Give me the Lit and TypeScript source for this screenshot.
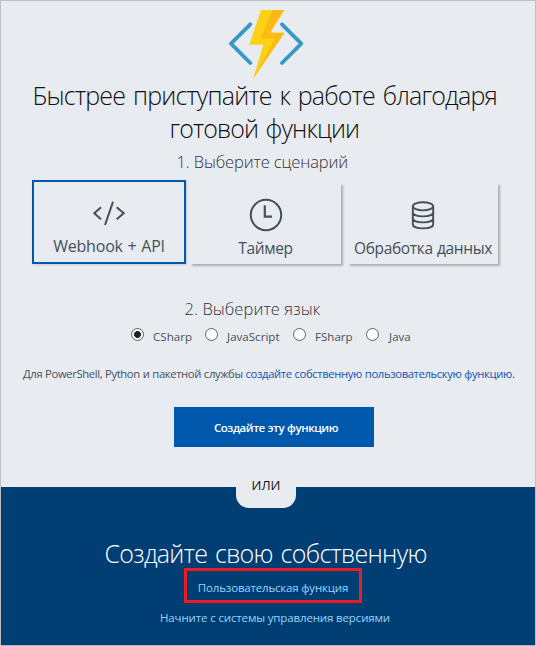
import { LitElement, html, css, svg } from "lit";
import { customElement, property, state } from "lit/decorators.js";

const icons: Record<string, unknown> = {
  code: svg`<g stroke-width="2"><path d="M20 11.3 13.3 17.3 20 23.3M35.7 11.3 42.7 17.3 35.7 23.3"/><path d="M32 5.7 24 29"/></g>`,
  clock: svg`<circle cx="28" cy="19" r="15.2" stroke-width="2"/><path d="M26.8 9.2V20.7H34" stroke-width="2.2"/>`,
  data: svg`<g stroke-width="1.9"><ellipse cx="28" cy="10.3" rx="10.2" ry="4.1"/><path d="M17.8 10.3V28.2C17.8 33.8 38.2 33.8 38.2 28.2V10.3M17.8 16.2C17.8 21.8 38.2 21.8 38.2 16.2M17.8 22.2C17.8 27.8 38.2 27.8 38.2 22.2"/></g>`,
};

@customElement("scenario-card")
class ScenarioCard extends LitElement {
  @property() icon = "code";
  @property() label = "";
  @property({ type: Boolean, reflect: true }) selected = false;

  static styles = css`
    :host {
      box-sizing: border-box;
      display: flex;
      flex-direction: column;
      align-items: center;
      height: 81px;
      padding-top: 13px;
      box-shadow: 2px 2px 2px rgba(0, 0, 0, 0.26);
      background: #e8ebf0;
      color: #46505a;
      font-size: 15.5px;
      letter-spacing: -0.34px;
      word-spacing: 0.5px;
      white-space: nowrap;
      cursor: pointer;
    }
    :host([selected]) {
      height: 84px;
      padding-top: 14px;
      border: 2px solid #0058ad;
      box-shadow: 1px 1px 2px rgba(0, 0, 0, 0.15);
      font-size: 16px;
      letter-spacing: -0.2px;
      word-spacing: 0.8px;
    }
    svg {
      width: 56px;
      height: 40px;
      fill: none;
      stroke: #46505a;
    }
    span {
      line-height: 24px;
    }
    :host([selected]) span {
      margin-top: -2px;
    }
  `;

  render() {
    return html`<svg viewBox="0 0 56 40">${icons[this.icon]}</svg><span>${this.label}</span>`;
  }
}

@customElement("app-root")
class AppRoot extends LitElement {
  @state() private language = "CSharp";
  private languages = ["CSharp", "JavaScript", "FSharp", "Java"];

  static styles = css`
    :host {
      display: block;
      font-family: "Open Sans", "Noto Sans", sans-serif;
      font-size: 11.5px;
      color: #46505a;
      white-space: nowrap;
    }
    .page {
      box-sizing: border-box;
      display: flex;
      flex-direction: column;
      width: 536px;
      height: 646px;
      border: 1px solid #bfc0c2;
      border-bottom-color: #a9b9ca;
      background: #e8ebf0;
    }
    .start {
      display: flex;
      flex-direction: column;
      height: 486px;
    }
    .logo {
      width: 78px;
      height: 78px;
      margin-left: 226px;
    }
    h1, h2, h3 {
      margin: 0;
      font-weight: 300;
    }
    h1 {
      font-size: 25px;
      line-height: 33px;
      color: #111;
    }
    h1 span {
      display: block;
      margin-left: 31.5px;
      letter-spacing: -0.8px;
      word-spacing: 2px;
    }
    h1 .second {
      margin-left: 168.5px;
      letter-spacing: -0.9px;
    }
    h3 {
      font-size: 16.5px;
      line-height: 24px;
      color: #333;
    }
    .step1 {
      margin: 5px 0 6px 175.5px;
      letter-spacing: -0.13px;
    }
    .step2 {
      margin: 33px 0 0 183.5px;
      letter-spacing: 0.08px;
    }
    .cards {
      display: grid;
      grid-template-columns: 154px 151px 150px;
      column-gap: 4px;
      align-items: end;
      height: 84px;
      margin-left: 31px;
    }
    .cards :last-child {
      margin-left: 3px;
      margin-right: -3px;
    }
    .languages {
      display: grid;
      grid-template-columns: 74px 88px 73px auto;
      height: 26px;
      margin-left: 130px;
    }
    label {
      display: flex;
      align-items: center;
      gap: 9px;
      letter-spacing: 0.04px;
    }
    label:last-child {
      gap: 10px;
    }
    label span {
      padding-top: 5px;
    }
    input {
      appearance: none;
      box-sizing: border-box;
      width: 13px;
      height: 13px;
      margin: 0;
      border: 1px solid #606060;
      border-radius: 50%;
      background: #fff;
    }
    input:checked {
      background: radial-gradient(circle, #222 3.1px, #fff 3.8px);
    }
    .note {
      margin: 17px 0 0 22px;
      font-size: 11.25px;
      line-height: 20px;
      letter-spacing: -0.37px;
      word-spacing: 0.3px;
    }
    .note a {
      color: #1154ae;
    }
    .create {
      width: 200px;
      height: 40px;
      margin: 23px 0 0 173px;
      padding: 1px 0 0 4px;
      border: 0;
      background: #0058ad;
      color: #fff;
      font: 600 11.5px "Open Sans", "Noto Sans", sans-serif;
      letter-spacing: -0.45px;
      word-spacing: 0.4px;
      text-align: center;
    }
    .custom {
      display: flex;
      flex-direction: column;
      align-items: flex-start;
      height: 158px;
      background: #003e74;
    }
    .or {
      width: 60px;
      height: 38px;
      margin: -17px 0 0 235px;
      border-radius: 0 0 13px 13px;
      background: #e8ebf0;
      color: #111;
      font-size: 13px;
      line-height: 30px;
      text-align: center;
    }
    h2 {
      margin: 29px 0 -2px 103.5px;
      font-size: 25px;
      line-height: 33px;
      letter-spacing: -0.7px;
      word-spacing: 2px;
      color: #fff;
    }
    .custom a {
      color: #95d6f8;
      line-height: 19px;
    }
    .marked {
      box-sizing: border-box;
      width: 178px;
      height: 35px;
      margin-left: 183px;
      padding-top: 7px;
      border: 3px solid #ed1c24;
      text-align: center;
      letter-spacing: -0.18px;
    }
    .source {
      margin: 5px 0 0 159px;
      letter-spacing: -0.14px;
    }
  `;

  render() {
    return html`
      <div class="page">
        <section class="start">
          <svg class="logo" viewBox="227 1 78 78">
            <path d="M250.3 24.3 231 43.6 250.3 63M282 24.3 301.3 43.6 282 63" fill="none" stroke="#3999c6" stroke-width="3.8" stroke-linecap="round" stroke-linejoin="round"/>
            <path d="M261 10H284.3L270 32.7H284.5L253 79 263.3 44.8H249.3Z" fill="#fcd116"/>
            <path d="M272.6 10H284.3L270 32.7H284.5L253 79 275 38.5H260.8Z" fill="#ffb913"/>
          </svg>
          <h1><span>Быстрее приступайте к работе благодаря</span><span class="second">готовой функции</span></h1>
          <h3 class="step1">1. Выберите сценарий</h3>
          <div class="cards">
            <scenario-card icon="code" label="Webhook + API" selected></scenario-card>
            <scenario-card icon="clock" label="Таймер"></scenario-card>
            <scenario-card icon="data" label="Обработка данных"></scenario-card>
          </div>
          <h3 class="step2">2. Выберите язык</h3>
          <div class="languages">
            ${this.languages.map(
              (name) => html`<label><input type="radio" name="language" .checked=${this.language === name} @change=${() => (this.language = name)}><span>${name}</span></label>`
            )}
          </div>
          <div class="note">Для PowerShell, Python и пакетной службы <a>создайте собственную пользовательскую функцию.</a></div>
          <button class="create">Создайте эту функцию</button>
        </section>
        <section class="custom">
          <div class="or">ИЛИ</div>
          <h2>Создайте свою собственную</h2>
          <a class="marked">Пользовательская функция</a>
          <a class="source">Начните с системы управления версиями</a>
        </section>
      </div>
    `;
  }
}
